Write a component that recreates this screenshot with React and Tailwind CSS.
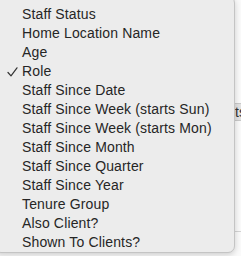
import React from "react";

const items = [
  "Staff Status",
  "Home Location Name",
  "Age",
  "Role",
  "Staff Since Date",
  "Staff Since Week (starts Sun)",
  "Staff Since Week (starts Mon)",
  "Staff Since Month",
  "Staff Since Quarter",
  "Staff Since Year",
  "Tenure Group",
  "Also Client?",
  "Shown To Clients?",
];

export default function App() {
  return (
    <div
      className="relative w-[241px] h-[256px] overflow-hidden bg-[#fafafa]"
      style={{ fontFamily: '"Liberation Sans", Arial, sans-serif' }}
    >
      {/* background page bits */}
      <div className="pt-[103px] pl-[234px]">
        <div className="h-[18px] w-[20px] bg-[#e2e2e2] border-y border-[#c9c9c9] text-[14px] leading-[16px] text-[#333] pl-[1px]">
          ts
        </div>
        <div className="mt-[110px] h-px w-[20px] bg-[#d4d4d4]" />
      </div>

      {/* menu */}
      <div className="absolute left-[-6px] top-[-4px] w-[241px] h-[257px] rounded-[7px] bg-[#ececec] border border-[#c4c4c4] shadow-[0_2px_6px_rgba(0,0,0,0.18)] pt-[8px]">
        {items.map((label) => (
          <div
            key={label}
            className="relative h-[19px] flex items-center pl-[27px] text-[14px] text-[#262626] whitespace-nowrap"
          >
            {label === "Role" && (
              <svg
                className="absolute left-[12px] top-[5px]"
                width="11"
                height="10"
                viewBox="0 0 11 10"
                fill="none"
              >
                <path
                  d="M1 5.5 L4 8.8 L10 0.8"
                  stroke="#333"
                  strokeWidth="1.2"
                  strokeLinecap="round"
                  strokeLinejoin="round"
                />
              </svg>
            )}
            <span className="tracking-[0.15px]">{label}</span>
          </div>
        ))}
      </div>
    </div>
  );
}
